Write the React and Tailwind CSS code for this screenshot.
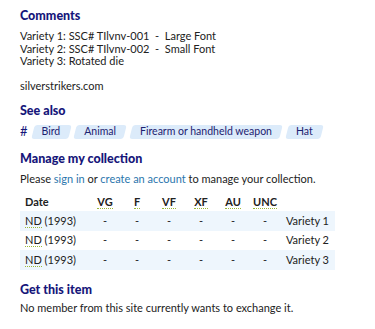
import React from "react";

const tags = ["Bird", "Animal", "Firearm or handheld weapon", "Hat"];
const grades = ["VG", "F", "VF", "XF", "AU", "UNC"];
const rows = ["Variety 1", "Variety 2", "Variety 3"];

const Abbr = ({ children }) => (
    <span className="border-b border-dotted border-[#9ab83a] leading-[11px]">{children}</span>
);

const Heading = ({ children, className = "" }) => (
    <h2 className={`text-[12.5px] leading-4 font-black text-[#16167a] ${className}`}>{children}</h2>
);

const App = () => {
    return (
        <div className="bg-white w-[375px] h-[329px] overflow-hidden px-5 pt-2 text-[11px] leading-[12.5px] text-[#222] font-['Lato',sans-serif]">
            {/* Comments */}
            <Heading>Comments</Heading>
            <p className="mt-[6px]">
                Variety 1: SSC# TIlvnv-001&nbsp; - &nbsp;Large Font<br />
                Variety 2: SSC# TIlvnv-002&nbsp; - &nbsp;Small Font<br />
                Variety 3: Rotated die<br />
                <br />
                silverstrikers.com
            </p>

            {/* See also */}
            <Heading className="mt-[10px]">See also</Heading>
            <div className="mt-[6px] flex items-center gap-[6px]">
                <span className="text-[13px] text-[#16167a] mr-[-1px]">#</span>
                {tags.map((t) => (
                    <span key={t} className="relative h-[14px] flex items-center px-[9px] text-[10.5px] text-[#1c2270]">
                        <span className="absolute inset-0 -skew-x-[14deg] rounded-[3px] bg-[#dcebfa]" />
                        <span className="relative">{t}</span>
                    </span>
                ))}
            </div>

            {/* Manage my collection */}
            <Heading className="mt-3">Manage my collection</Heading>
            <p className="mt-[6px]">
                Please <span className="text-[#2b76ad]">sign in</span> or{" "}
                <span className="text-[#2b76ad]">create an account</span> to manage your collection.
            </p>

            <div className="mt-2 w-[315px]">
                <div className="grid grid-cols-[69px_repeat(6,32px)_54px] h-[18px] items-center font-bold">
                    <span className="pl-[5px]">Date</span>
                    {grades.map((g) => (
                        <span key={g} className="text-center">
                            <Abbr>{g}</Abbr>
                        </span>
                    ))}
                    <span />
                </div>
                {rows.map((r, i) => (
                    <div
                        key={r}
                        className={`grid grid-cols-[69px_repeat(6,32px)_54px] h-[19.5px] items-center ${i % 2 === 0 ? "bg-[#eef6fd]" : ""}`}
                    >
                        <span className="pl-[5px]">
                            <Abbr>ND</Abbr> (1993)
                        </span>
                        {grades.map((g) => (
                            <span key={g} className="text-center">-</span>
                        ))}
                        <span className="text-right pr-[6px]">{r}</span>
                    </div>
                ))}
            </div>

            {/* Get this item */}
            <Heading className="mt-3">Get this item</Heading>
            <p className="mt-[4px]">No member from this site currently wants to exchange it.</p>
        </div>
    );
};

export default App;
